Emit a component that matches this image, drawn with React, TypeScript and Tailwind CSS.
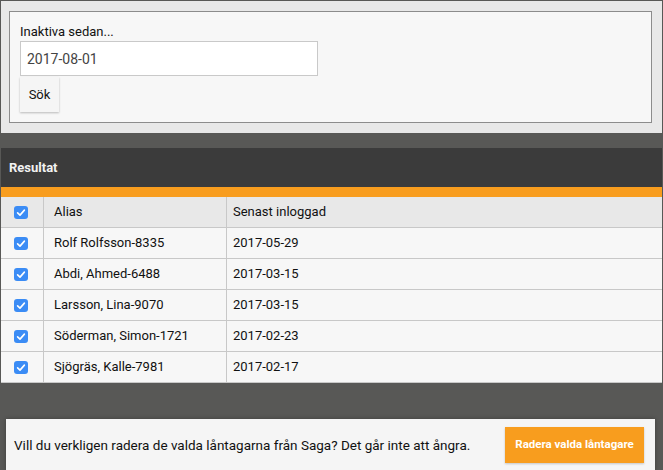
import { useState } from "react"

const rows = [
  { alias: "Rolf Rolfsson-8335", date: "2017-05-29" },
  { alias: "Abdi, Ahmed-6488", date: "2017-03-15" },
  { alias: "Larsson, Lina-9070", date: "2017-03-15" },
  { alias: "Söderman, Simon-1721", date: "2017-02-23" },
  { alias: "Sjögräs, Kalle-7981", date: "2017-02-17" },
]

function Check({ checked, onClick }: { checked: boolean; onClick: () => void }) {
  return (
    <button
      onClick={onClick}
      className={
        checked
          ? "w-[14px] h-[13px] rounded-[3px] bg-[#3b8cf5] flex items-center justify-center"
          : "w-[14px] h-[13px] rounded-[3px] bg-white border border-[#999]"
      }
    >
      {checked && (
        <svg width="14" height="13" viewBox="0 0 14 13">
          <path d="M3.6 6.8 L6 9.1 L10.4 4.1" fill="none" stroke="white" strokeWidth="1.6" strokeLinecap="round" strokeLinejoin="round" />
        </svg>
      )}
    </button>
  )
}

export default function App() {
  const [date, setDate] = useState("2017-08-01")
  const [selected, setSelected] = useState(rows.map(() => true))
  const all = selected.every(Boolean)

  return (
    <div className="min-h-[470px] bg-[#585856] pt-px px-px overflow-hidden font-['Roboto',sans-serif] text-[13px] text-[#111]">
      {/* search */}
      <div className="bg-[#e8e8e8] pl-2 pr-[10px] py-[10px]">
        <div className="border border-[#8c8c8c] bg-[#f7f7f7] pl-[10px] pt-[10px] pb-[10px]">
          <div className="leading-[19px]">Inaktiva sedan...</div>
          <input
            value={date}
            onChange={(e) => setDate(e.target.value)}
            className="block w-[298px] h-[35px] border border-[#c9c9c9] bg-white px-[6px] text-[14px] text-[#444] outline-none"
          />
          <button className="mt-px w-[39px] h-[35px] bg-[#f5f5f5] text-[13px] shadow-[0_1px_2px_rgba(0,0,0,0.25)]">
            Sök
          </button>
        </div>
      </div>

      {/* results */}
      <div className="mt-[15px] h-[39px] bg-[#3b3b3b] flex items-center pl-2 text-[#f2f2f2] font-bold">
        Resultat
      </div>
      <div className="h-[10px] bg-[#f89d1e]" />

      <div className="bg-[#f7f7f7]">
        <div className="flex h-[31px] bg-[#e8e8e8] border-b border-[#c8c8c8]">
          <div className="w-[43px] border-r border-[#c8c8c8] flex items-center pl-[13px]">
            <Check checked={all} onClick={() => setSelected(rows.map(() => !all))} />
          </div>
          <div className="w-[183px] border-r border-[#c8c8c8] flex items-center pl-[10px]">Alias</div>
          <div className="flex-1 flex items-center pl-[6px]">Senast inloggad</div>
        </div>
        {rows.map((r, i) => (
          <div key={r.alias} className="flex h-[31px] border-b border-[#c8c8c8]">
            <div className="w-[43px] border-r border-[#c8c8c8] flex items-center pl-[13px]">
              <Check
                checked={selected[i]}
                onClick={() => setSelected(selected.map((s, j) => (j === i ? !s : s)))}
              />
            </div>
            <div className="w-[183px] border-r border-[#c8c8c8] flex items-center pl-[10px]">{r.alias}</div>
            <div className="flex-1 flex items-center pl-[6px]">{r.date}</div>
          </div>
        ))}
      </div>

      {/* confirm */}
      <div className="mt-[36px] ml-[5px] mr-[7px] h-[52px] bg-[#f5f5f5] flex items-center justify-between pl-[8px] pr-[11px] shadow-[0_0_4px_rgba(0,0,0,0.3)]">
        <span className="text-[13.5px]">Vill du verkligen radera de valda låntagarna från Saga? Det går inte att ångra.</span>
        <button className="w-[139px] h-[36px] bg-[#f89d1e] text-white font-bold text-[11.5px] shadow-[0_1px_2px_rgba(0,0,0,0.2)]">
          Radera valda låntagare
        </button>
      </div>
    </div>
  )
}
